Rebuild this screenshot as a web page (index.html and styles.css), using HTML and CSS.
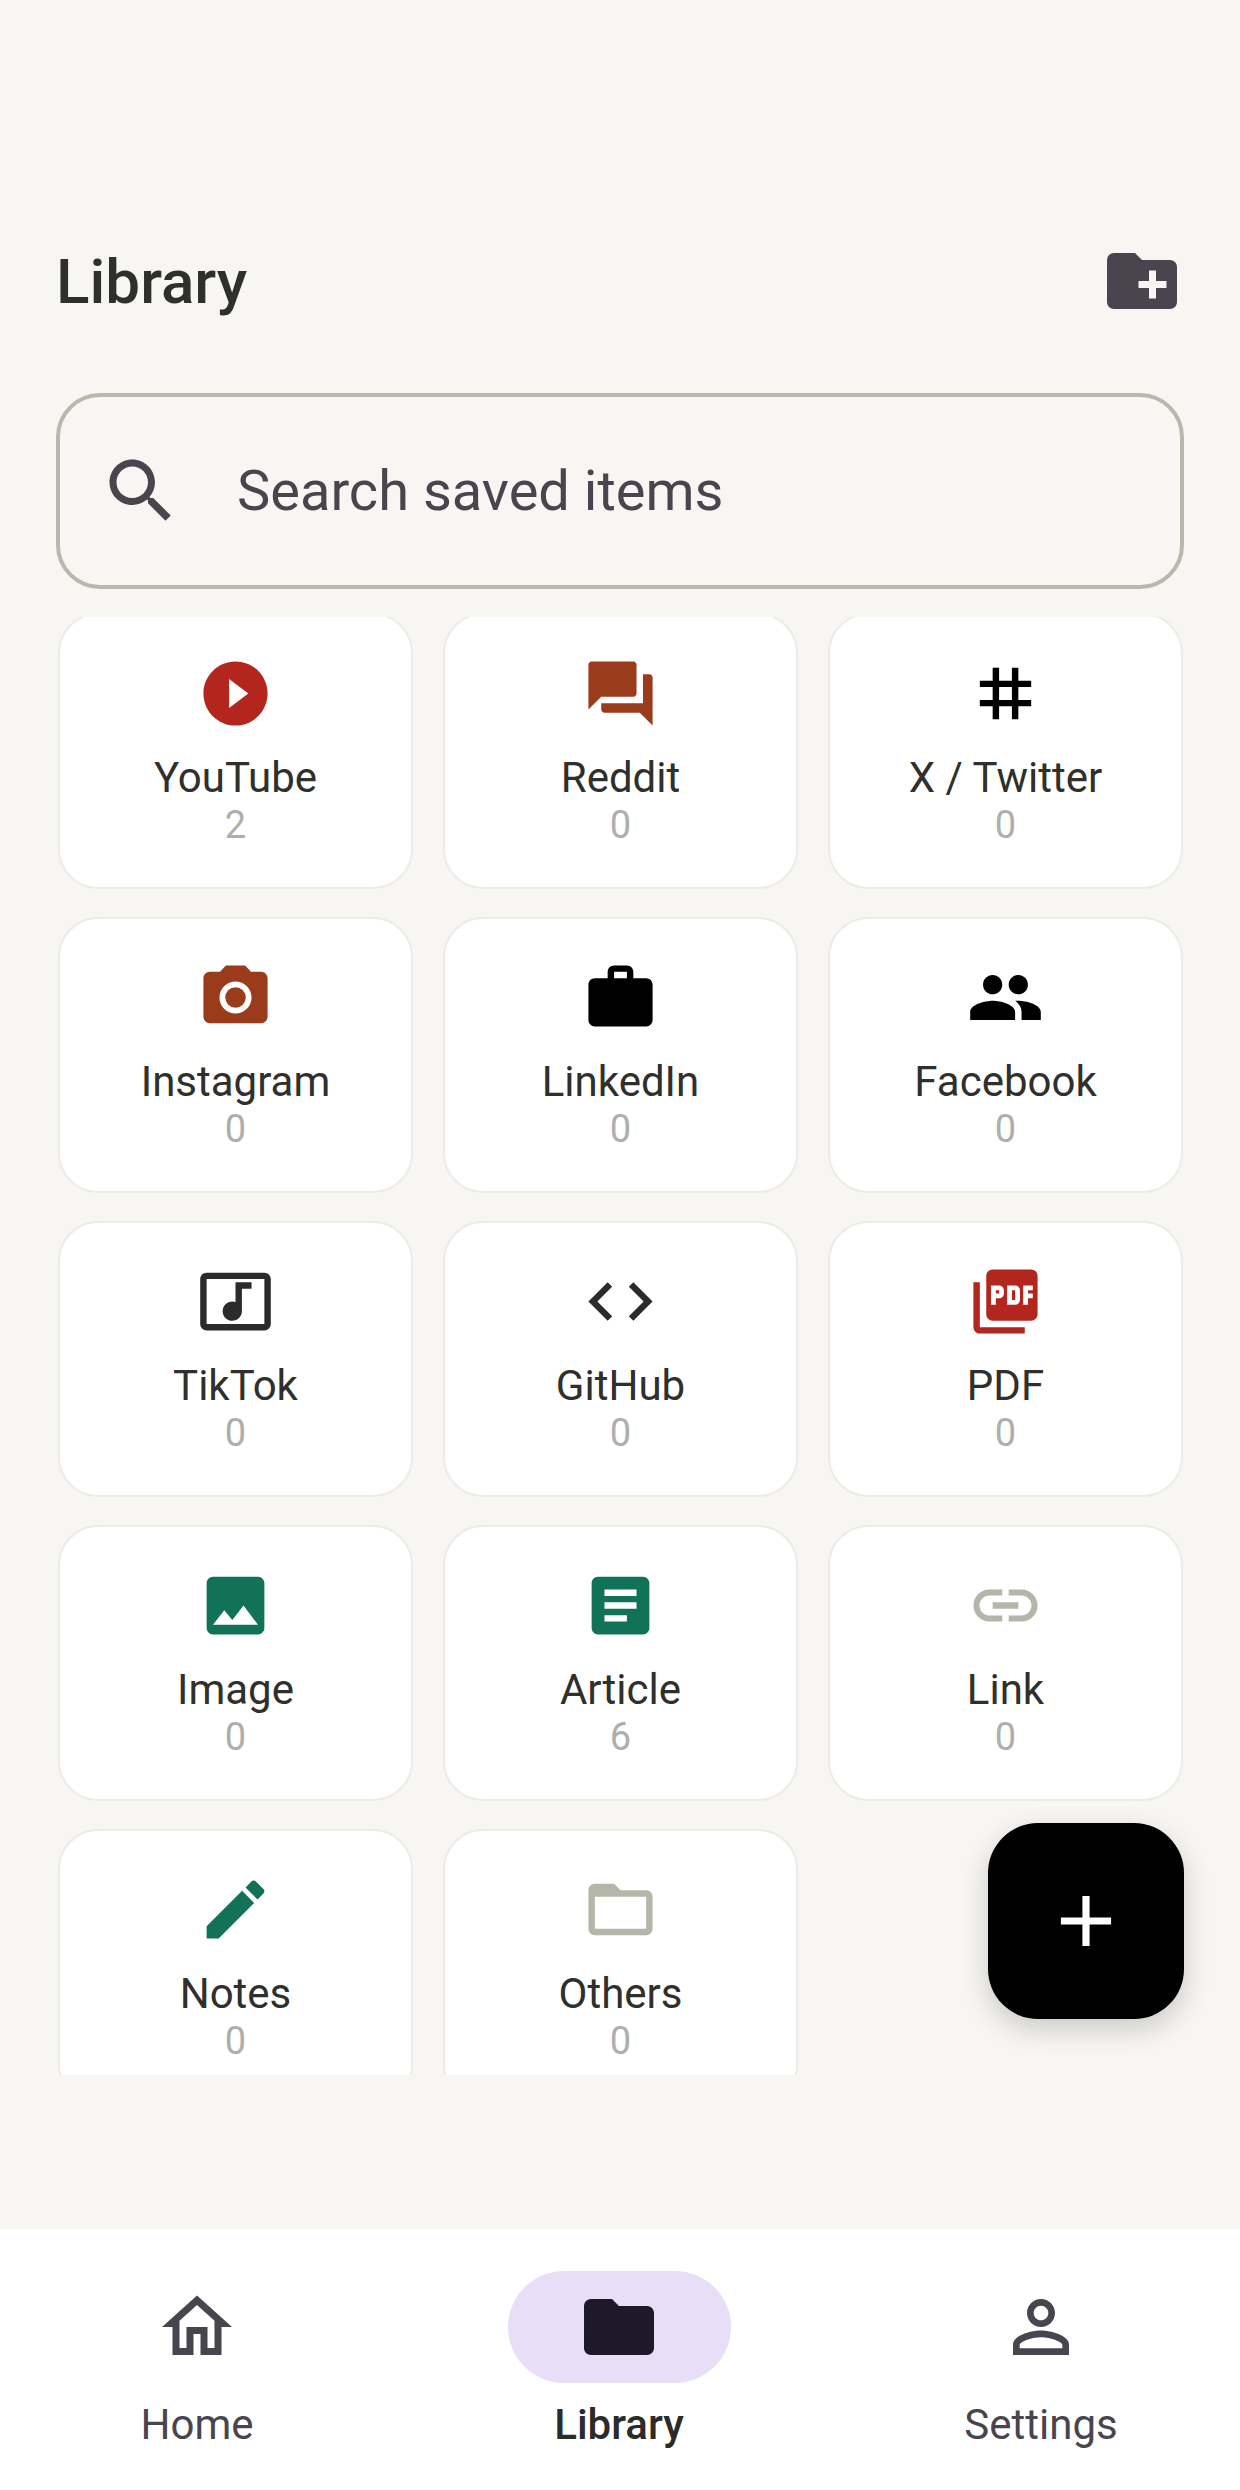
FILE: index.html
```html
<!DOCTYPE html>
<html lang="en">
<head>
  <meta charset="UTF-8">
  <meta name="viewport" content="width=device-width, initial-scale=1.0">
  <title>Library</title>
  <link rel="stylesheet" href="styles.css">
</head>
<body>
  <main class="library">
    <!-- Header -->
    <header class="library-header">
      <h1>Library</h1>
      <svg class="header-icon" viewBox="0 0 24 24"><path d="M20 6h-8l-2-2H4c-1.11 0-1.99.89-1.99 2L2 18c0 1.11.89 2 2 2h16c1.11 0 2-.89 2-2V8c0-1.11-.89-2-2-2zm-1 8h-3v3h-2v-3h-3v-2h3V9h2v3h3v2z"/></svg>
    </header>

    <!-- Search -->
    <div class="search-box">
      <svg class="search-icon" viewBox="0 0 24 24"><path d="M15.5 14h-.79l-.28-.27C15.41 12.59 16 11.11 16 9.5 16 5.91 13.09 3 9.5 3S3 5.91 3 9.5 5.91 16 9.5 16c1.61 0 3.09-.59 4.23-1.57l.27.28v.79l5 4.99L20.49 19l-4.99-5zm-6 0C7.01 14 5 11.99 5 9.5S7.01 5 9.5 5 14 7.01 14 9.5 11.99 14 9.5 14z"/></svg>
      <span class="search-text">Search saved items</span>
    </div>

    <!-- Categories -->
    <div class="grid-viewport">
      <div class="category-grid">
        <div class="card">
          <svg class="card-icon red" viewBox="0 0 24 24"><path d="M12 2C6.48 2 2 6.48 2 12s4.48 10 10 10 10-4.48 10-10S17.52 2 12 2zm-2 14.5v-9l6 4.5-6 4.5z"/></svg>
          <span class="card-name">YouTube</span>
          <span class="card-count">2</span>
        </div>
        <div class="card">
          <svg class="card-icon brown" viewBox="0 0 24 24"><path d="M21 6h-2v9H6v2c0 .55.45 1 1 1h11l4 4V7c0-.55-.45-1-1-1zm-4 6V3c0-.55-.45-1-1-1H3c-.55 0-1 .45-1 1v14l4-4h10c.55 0 1-.45 1-1z"/></svg>
          <span class="card-name">Reddit</span>
          <span class="card-count">0</span>
        </div>
        <div class="card">
          <svg class="card-icon black" viewBox="0 0 24 24"><path d="M20 10V8h-4V4h-2v4h-4V4H8v4H4v2h4v4H4v2h4v4h2v-4h4v4h2v-4h4v-2h-4v-4h4zm-6 4h-4v-4h4v4z"/></svg>
          <span class="card-name">X / Twitter</span>
          <span class="card-count">0</span>
        </div>
        <div class="card">
          <svg class="card-icon brown" viewBox="0 0 24 24"><circle cx="12" cy="12" r="3.2"/><path d="M9 2L7.17 4H4c-1.1 0-2 .9-2 2v12c0 1.1.9 2 2 2h16c1.1 0 2-.9 2-2V6c0-1.1-.9-2-2-2h-3.17L15 2H9zm3 15c-2.76 0-5-2.24-5-5s2.24-5 5-5 5 2.24 5 5-2.24 5-5 5z"/></svg>
          <span class="card-name">Instagram</span>
          <span class="card-count">0</span>
        </div>
        <div class="card">
          <svg class="card-icon black" viewBox="0 0 24 24"><path d="M20 6h-4V4c0-1.11-.89-2-2-2h-4c-1.11 0-2 .89-2 2v2H4c-1.11 0-1.99.89-1.99 2L2 19c0 1.11.89 2 2 2h16c1.11 0 2-.89 2-2V8c0-1.11-.89-2-2-2zm-6 0h-4V4h4v2z"/></svg>
          <span class="card-name">LinkedIn</span>
          <span class="card-count">0</span>
        </div>
        <div class="card">
          <svg class="card-icon black" viewBox="0 0 24 24"><path d="M16 11c1.66 0 2.99-1.34 2.99-3S17.66 5 16 5c-1.66 0-3 1.34-3 3s1.34 3 3 3zm-8 0c1.66 0 2.99-1.34 2.99-3S9.66 5 8 5C6.34 5 5 6.34 5 8s1.34 3 3 3zm0 2c-2.33 0-7 1.17-7 3.5V19h14v-2.5c0-2.33-4.67-3.5-7-3.5zm8 0c-.29 0-.62.02-.97.05 1.16.84 1.97 1.97 1.97 3.45V19h6v-2.5c0-2.33-4.67-3.5-7-3.5z"/></svg>
          <span class="card-name">Facebook</span>
          <span class="card-count">0</span>
        </div>
        <div class="card">
          <svg class="card-icon dark" viewBox="0 0 24 24"><path d="M21 3H3c-1.11 0-2 .89-2 2v14c0 1.1.89 2 2 2h18c1.1 0 2-.9 2-2V5c0-1.11-.9-2-2-2zm0 16H3V5h18v14zM8 15c0-1.66 1.34-3 3-3 .35 0 .69.07 1 .18V6h5v2h-3v7.03c-.02 1.64-1.35 2.97-3 2.97-1.66 0-3-1.34-3-3z"/></svg>
          <span class="card-name">TikTok</span>
          <span class="card-count">0</span>
        </div>
        <div class="card">
          <svg class="card-icon dark" viewBox="0 0 24 24"><path d="M9.4 16.6L4.8 12l4.6-4.6L8 6l-6 6 6 6 1.4-1.4zm5.2 0l4.6-4.6-4.6-4.6L16 6l6 6-6 6-1.4-1.4z"/></svg>
          <span class="card-name">GitHub</span>
          <span class="card-count">0</span>
        </div>
        <div class="card">
          <svg class="card-icon red" viewBox="0 0 24 24"><path d="M20 2H8c-1.1 0-2 .9-2 2v12c0 1.1.9 2 2 2h12c1.1 0 2-.9 2-2V4c0-1.1-.9-2-2-2zm-8.5 7.5c0 .83-.67 1.5-1.5 1.5H9v2H7.5V7H10c.83 0 1.5.67 1.5 1.5v1zm5 2c0 .83-.67 1.5-1.5 1.5h-2.5V7H15c.83 0 1.5.67 1.5 1.5v3zm4-3H19v1h1.5V11H19v2h-1.5V7h3v1.5zM9 9.5h1v-1H9v1zM4 6H2v14c0 1.1.9 2 2 2h14v-2H4V6zm10 5.5h1v-3h-1v3z"/></svg>
          <span class="card-name">PDF</span>
          <span class="card-count">0</span>
        </div>
        <div class="card">
          <svg class="card-icon green" viewBox="0 0 24 24"><path d="M21 19V5c0-1.1-.9-2-2-2H5c-1.1 0-2 .9-2 2v14c0 1.1.9 2 2 2h14c1.1 0 2-.9 2-2zM8.5 13.5l2.5 3.01L14.5 12l4.5 6H5l3.5-4.5z"/></svg>
          <span class="card-name">Image</span>
          <span class="card-count">0</span>
        </div>
        <div class="card">
          <svg class="card-icon green" viewBox="0 0 24 24"><path d="M19 3H5c-1.1 0-2 .9-2 2v14c0 1.1.9 2 2 2h14c1.1 0 2-.9 2-2V5c0-1.1-.9-2-2-2zm-5 14H7v-2h7v2zm3-4H7v-2h10v2zm0-4H7V7h10v2z"/></svg>
          <span class="card-name">Article</span>
          <span class="card-count">6</span>
        </div>
        <div class="card">
          <svg class="card-icon grey" viewBox="0 0 24 24"><path d="M3.9 12c0-1.71 1.39-3.1 3.1-3.1h4V7H7c-2.76 0-5 2.24-5 5s2.24 5 5 5h4v-1.9H7c-1.71 0-3.1-1.39-3.1-3.1zM8 13h8v-2H8v2zm9-6h-4v1.9h4c1.71 0 3.1 1.39 3.1 3.1s-1.39 3.1-3.1 3.1h-4V17h4c2.76 0 5-2.24 5-5s-2.24-5-5-5z"/></svg>
          <span class="card-name">Link</span>
          <span class="card-count">0</span>
        </div>
        <div class="card">
          <svg class="card-icon green" viewBox="0 0 24 24"><path d="M3 17.25V21h3.75L17.81 9.94l-3.75-3.75L3 17.25zM20.71 7.04c.39-.39.39-1.02 0-1.41l-2.34-2.34c-.39-.39-1.02-.39-1.41 0l-1.83 1.83 3.75 3.75 1.83-1.83z"/></svg>
          <span class="card-name">Notes</span>
          <span class="card-count">0</span>
        </div>
        <div class="card">
          <svg class="card-icon grey" viewBox="0 0 24 24"><path d="M20 6h-8l-2-2H4c-1.1 0-1.99.9-1.99 2L2 18c0 1.1.9 2 2 2h16c1.1 0 2-.9 2-2V8c0-1.1-.9-2-2-2zm0 12H4V8h16v10z"/></svg>
          <span class="card-name">Others</span>
          <span class="card-count">0</span>
        </div>
      </div>
    </div>
  </main>

  <!-- Add button -->
  <button class="fab">
    <svg viewBox="0 0 24 24"><path d="M19 13h-6v6h-2v-6H5v-2h6V5h2v6h6v2z"/></svg>
  </button>

  <!-- Bottom navigation -->
  <nav class="bottom-nav">
    <div class="nav-item">
      <span class="nav-pill"><svg viewBox="0 0 24 24"><path d="M12 5.69l5 4.5V18h-2v-6H9v6H7v-7.81l5-4.5M12 3L2 12h3v8h6v-6h2v6h6v-8h3L12 3z"/></svg></span>
      <span class="nav-label">Home</span>
    </div>
    <div class="nav-item active">
      <span class="nav-pill"><svg viewBox="0 0 24 24"><path d="M10 4H4c-1.1 0-1.99.9-1.99 2L2 18c0 1.1.9 2 2 2h16c1.1 0 2-.9 2-2V8c0-1.1-.9-2-2-2h-8l-2-2z"/></svg></span>
      <span class="nav-label">Library</span>
    </div>
    <div class="nav-item">
      <span class="nav-pill"><svg viewBox="0 0 24 24"><path d="M12 5.9c1.16 0 2.1.94 2.1 2.1s-.94 2.1-2.1 2.1S9.9 9.16 9.9 8s.94-2.1 2.1-2.1m0 9c2.97 0 6.1 1.46 6.1 2.1v1.1H5.9V17c0-.64 3.13-2.1 6.1-2.1M12 4C9.79 4 8 5.79 8 8s1.79 4 4 4 4-1.79 4-4-1.79-4-4-4zm0 9c-2.67 0-8 1.34-8 4v3h16v-3c0-2.66-5.33-4-8-4z"/></svg></span>
      <span class="nav-label">Settings</span>
    </div>
  </nav>
</body>
</html>
```

FILE: styles.css
```css
body {
  font-family: 'Roboto', sans-serif;
  margin: 0;
  padding: 0;
  background: #f7f6f2;
  color: #2f2f2c;
  display: flex;
  flex-direction: column;
  height: 2490px;
  overflow: hidden;
  position: relative;
}
svg {
  display: block;
  fill: currentColor;
}
.library {
  flex: 1;
  padding: 239px 56px 0;
}
.library-header {
  display: flex;
  justify-content: space-between;
  align-items: center;
  height: 84px;
}
.library-header h1 {
  margin: 0;
  font-size: 62px;
  font-weight: 500;
}
.header-icon {
  width: 84px;
  height: 84px;
  color: #49454f;
}
.search-box {
  display: flex;
  align-items: center;
  box-sizing: border-box;
  height: 196px;
  margin-top: 70px;
  padding-left: 39px;
  border: 4px solid #b8b8ae;
  border-radius: 44px;
}
.search-icon {
  width: 84px;
  height: 84px;
  color: #49454f;
}
.search-text {
  margin-left: 54px;
  font-size: 56px;
  color: #49454f;
}
.grid-viewport {
  height: 1458px;
  margin-top: 28px;
  padding: 0 1px 0 2px;
  overflow: hidden;
}
.category-grid {
  display: grid;
  grid-template-columns: repeat(3, 1fr);
  grid-auto-rows: 276px;
  gap: 28px 30px;
  margin-top: -4px;
}
.card {
  display: flex;
  flex-direction: column;
  align-items: center;
  box-sizing: border-box;
  padding-top: 40px;
  background: #fff;
  border: 2px solid #ecebe7;
  border-radius: 40px;
}
.card-icon {
  width: 77px;
  height: 77px;
}
.red { color: #b3261e; }
.brown { color: #9a3b1b; }
.black { color: #000; }
.dark { color: #2b2b2b; }
.green { color: #117258; }
.grey { color: #b5b5aa; }
.card-name {
  margin-top: 21px;
  font-size: 42px;
  line-height: 50px;
}
.card-count {
  font-size: 38px;
  line-height: 44px;
  color: #aeaeae;
}
.fab {
  position: absolute;
  right: 56px;
  bottom: 471px;
  display: flex;
  align-items: center;
  justify-content: center;
  width: 196px;
  height: 196px;
  padding: 0;
  border: none;
  border-radius: 50px;
  background: #000;
  color: #fff;
  box-shadow: 0 10px 28px rgba(0, 0, 0, 0.18);
}
.fab svg {
  width: 86px;
  height: 86px;
}
.bottom-nav {
  display: grid;
  grid-template-columns: repeat(3, 1fr);
  column-gap: 28px;
  height: 261px;
  box-sizing: border-box;
  padding: 42px 2px 0 0;
  background: #fff;
}
.nav-item {
  display: flex;
  flex-direction: column;
  align-items: center;
  color: #49454f;
}
.nav-pill {
  display: flex;
  align-items: center;
  justify-content: center;
  width: 223px;
  height: 112px;
  border-radius: 56px;
}
.nav-pill svg {
  width: 84px;
  height: 84px;
}
.nav-label {
  margin-top: 16px;
  font-size: 42px;
  line-height: 52px;
}
.nav-item.active .nav-pill {
  background: #e8def8;
  color: #1d192b;
}
.nav-item.active .nav-label {
  color: #2b2b28;
  font-weight: 500;
}
```
